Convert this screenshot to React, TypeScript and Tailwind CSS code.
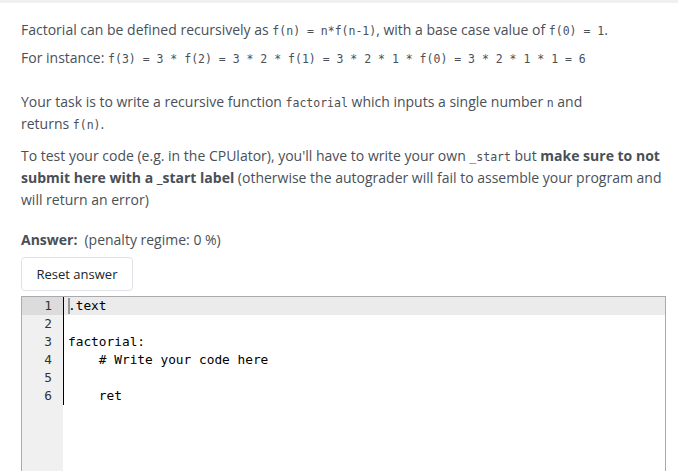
function C({ children }: { children: React.ReactNode }) {
  return (
    <code className="font-['DejaVu_Sans_Mono',monospace] text-[11.5px] leading-none text-[#495057]">
      {children}
    </code>
  );
}

const LINES = [".text", "", "factorial:", "    # Write your code here", "", "    ret"];

export default function App() {
  return (
    <div className="min-h-screen bg-white font-['Open_Sans',sans-serif] text-[14px] leading-[22px] text-[#495057]">
      <div className="h-[3px] bg-[#eef0f2]" />
      <div className="pl-[21px] pr-[12px] pt-[16px]">
        <p className="mb-[6px]">
          Factorial can be defined recursively as <C>f(n) = n*f(n-1)</C>, with a base case
          value of <C>f(0) = 1</C>.
        </p>
        <p className="mb-[22px]">
          For instance: <C>f(3) = 3 * f(2) = 3 * 2 * f(1) = 3 * 2 * 1 * f(0) = 3 * 2 * 1 * 1 = 6</C>
        </p>
        <p className="mb-[10px]">
          Your task is to write a recursive function <C>factorial</C> which inputs a single number{" "}
          <C>n</C> and
          <br />
          returns <C>f(n)</C>.
        </p>
        <p className="mb-[8px]">
          To test your code (e.g. in the CPUlator), you'll have to write your own <C>_start</C> but{" "}
          <b>make sure to not submit here with a _start label</b> (otherwise the autograder will fail
          to assemble your program and will return an error)
        </p>

        <div className="mt-[18px]">
          <b>Answer:</b>
          <span className="ml-[7px]">(penalty regime: 0 %)</span>
        </div>

        <button
          type="button"
          className="mt-[6px] h-[34px] w-[112px] rounded-[4px] border border-[#dee2e6] bg-white text-[13px] text-[#212529]"
        >
          Reset answer
        </button>

        <div className="mt-[5px] flex h-[300px] w-[645px] border border-[#aaaaaa] font-['DejaVu_Sans_Mono',monospace] text-[12.8px] leading-[18px] text-black">
          <div className="w-[41px] shrink-0 bg-[#f0f0f0] text-[#333]">
            {LINES.map((_, i) => (
              <div
                key={i}
                className={`h-[18px] pr-[11px] text-right ${i === 0 ? "bg-[#dcdcdc]" : ""}`}
              >
                {i + 1}
              </div>
            ))}
          </div>
          <div className="flex-1">
            <div className="border-l border-black">
              {LINES.map((line, i) => (
                <div
                  key={i}
                  className={`relative h-[18px] whitespace-pre pl-[4px] ${i === 0 ? "bg-[#ebebeb]" : ""}`}
                >
                  {i === 0 && (
                    <span className="absolute left-[4px] top-[1px] h-[16px] w-[2px] bg-[#999]" />
                  )}
                  {line}
                </div>
              ))}
            </div>
          </div>
        </div>
      </div>
    </div>
  );
}
